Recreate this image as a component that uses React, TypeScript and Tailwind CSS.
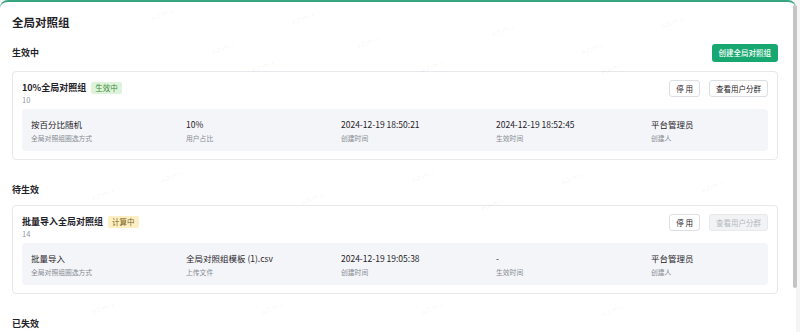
const groups = [
  {
    name: "10%全局对照组",
    id: "10",
    badge: "生效中",
    badgeClass: "bg-[#dff3dc] text-[#3d8b3a]",
    viewDisabled: false,
    fields: [
      { value: "按百分比随机", label: "全局对照组圈选方式" },
      { value: "10%", label: "用户占比" },
      { value: "2024-12-19 18:50:21", label: "创建时间" },
      { value: "2024-12-19 18:52:45", label: "生效时间" },
      { value: "平台管理员", label: "创建人" },
    ],
  },
  {
    name: "批量导入全局对照组",
    id: "14",
    badge: "计算中",
    badgeClass: "bg-[#fcefc4] text-[#7d6420]",
    viewDisabled: true,
    fields: [
      { value: "批量导入", label: "全局对照组圈选方式" },
      { value: "全局对照组模板 (1).csv", label: "上传文件" },
      { value: "2024-12-19 19:05:38", label: "创建时间" },
      { value: "-", label: "生效时间" },
      { value: "平台管理员", label: "创建人" },
    ],
  },
];

// faint "admin" watermark positions
const marks = [
  [150, 6], [290, 10], [210, 40], [355, 34], [490, 22], [580, 40], [660, 14], [600, 60],
  [420, 58], [250, 58], [160, 168], [410, 168], [560, 170], [700, 178],
  [90, 186], [300, 190], [480, 196], [260, 300], [420, 300], [600, 302], [90, 300],
];

const btn = "h-[17px] rounded-[3px] border px-[6px] text-[7.5px] leading-[15px]";

function Card({ g }: { g: (typeof groups)[number] }) {
  return (
    <div className="rounded-[4px] border border-[#e6e8eb] bg-white px-[9px] pt-[9px] pb-[8px]">
      <div className="flex items-start justify-between">
        <div>
          <div className="flex h-[13px] items-center gap-[5px]">
            <span className="text-[9px] font-semibold leading-[13px] text-[#1f2329]">{g.name}</span>
            <span className={`rounded-[2px] px-[4px] text-[7.5px] leading-[12px] ${g.badgeClass}`}>{g.badge}</span>
          </div>
          <div className="text-[7.5px] leading-[11px] text-[#8f959e]">{g.id}</div>
        </div>
        <div className="-mt-[1px] flex gap-[9px]">
          <button className={`${btn} border-[#dcdfe4] bg-white text-[#1f2329]`}>停 用</button>
          <button
            className={
              g.viewDisabled
                ? `${btn} border-[#e8e9eb] bg-[#f2f3f5] text-[#b5b9bf]`
                : `${btn} border-[#dcdfe4] bg-white text-[#1f2329]`
            }
          >
            查看用户分群
          </button>
        </div>
      </div>
      <div className="mt-[4px] grid grid-cols-[155px_155px_155px_155px_1fr] rounded-[4px] bg-[#f4f5f8] pl-[9px] pt-[9px] pb-[8px]">
        {g.fields.map((f) => (
          <div key={f.label}>
            <div className="text-[8.5px] leading-[12px] text-[#1f2329]">{f.value}</div>
            <div className="mt-[3px] text-[6.8px] leading-[10px] text-[#868b94]">{f.label}</div>
          </div>
        ))}
      </div>
    </div>
  );
}

export default function App() {
  return (
    <div
      className="relative h-[332px] w-[800px] overflow-hidden bg-[#f5f5f6]"
      style={{ fontFamily: '"Noto Sans CJK SC", "Noto Sans", "Liberation Sans", sans-serif' }}
    >
      <div className="relative h-[340px] w-[796px] rounded-t-[8px] border-t-[2px] border-[#37a57f] bg-white pl-[12px] pr-[18px]">
        <h1 className="pt-[13px] text-[11.5px] font-semibold leading-[14px] text-[#1f2329]">全局对照组</h1>

        <div className="mt-[15px] flex h-[18px] items-center justify-between">
          <h2 className="text-[9px] font-semibold leading-[18px] text-[#1f2329]">生效中</h2>
          <button className="h-[18px] rounded-[3px] bg-[#16a870] px-[7px] text-[7.5px] font-medium leading-[18px] text-white">
            创建全局对照组
          </button>
        </div>
        <div className="mt-[9px]">
          <Card g={groups[0]} />
        </div>

        <h2 className="mt-[21px] h-[18px] text-[9px] font-semibold leading-[18px] text-[#1f2329]">待生效</h2>
        <div className="mt-[6px]">
          <Card g={groups[1]} />
        </div>

        <h2 className="mt-[21px] h-[18px] text-[9px] font-semibold leading-[18px] text-[#1f2329]">已失效</h2>

        {marks.map(([x, y], i) => (
          <span
            key={i}
            className="pointer-events-none absolute -rotate-[18deg] select-none text-[8px] text-[#000000]/[0.05]"
            style={{ left: x, top: y }}
          >
            admin
          </span>
        ))}
      </div>

      {/* scrollbar thumb */}
      <div className="absolute left-[793px] top-[5px] h-[283px] w-[4px] rounded-full bg-[#c4c4c4]" />
    </div>
  );
}
